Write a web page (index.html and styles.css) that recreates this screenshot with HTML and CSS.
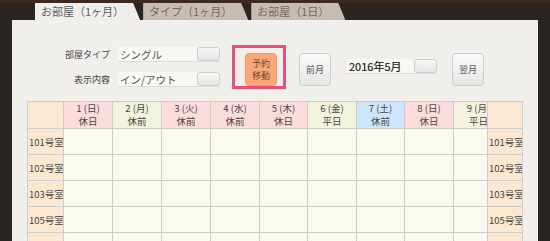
FILE: index.html
```html
<!DOCTYPE html>
<html lang="ja">
<head>
  <meta charset="UTF-8" />
  <meta name="viewport" content="width=device-width, initial-scale=1.0" />
  <title>予約カレンダー</title>
  <link rel="stylesheet" href="styles.css">
</head>
<body>
  <div class="frame">
    <ul class="tabs">
      <li class="tab active">お部屋（1ヶ月）</li>
      <li class="tab">タイプ（1ヶ月）</li>
      <li class="tab">お部屋（1日）</li>
    </ul>

    <div class="panel">
      <div class="toolbar">
        <div class="filters">
          <div class="filter">
            <span class="filter-label">部屋タイプ</span>
            <div class="select"><span class="select-value">シングル</span><span class="select-btn"></span></div>
          </div>
          <div class="filter">
            <span class="filter-label">表示内容</span>
            <div class="select"><span class="select-value">イン/アウト</span><span class="select-btn"></span></div>
          </div>
        </div>

        <div class="highlight">
          <button class="btn btn-reserve">予約<br>移動</button>
        </div>

        <button class="btn btn-prev">前月</button>
        <div class="select select-date"><span class="select-value">2016年5月</span><span class="select-btn"></span></div>
        <button class="btn btn-next">翌月</button>
      </div>

      <table class="calendar">
        <colgroup>
          <col style="width:36px"><col style="width:49px"><col style="width:49px"><col style="width:49px"><col style="width:49px">
          <col style="width:48px"><col style="width:49px"><col style="width:48px"><col style="width:49px"><col style="width:34px"><col style="width:35px">
        </colgroup>
        <thead>
          <tr>
            <th class="room"></th>
            <th class="holiday">1 (日)<br>休日</th>
            <th class="weekday">2 (月)<br>休前</th>
            <th class="holiday">3 (火)<br>休前</th>
            <th class="holiday">4 (水)<br>休前</th>
            <th class="holiday">5 (木)<br>休日</th>
            <th class="weekday">6 (金)<br>平日</th>
            <th class="saturday">7 (土)<br>休前</th>
            <th class="holiday">8 (日)<br>休日</th>
            <th class="weekday cut"><div class="cut-inner">9 (月)<br>平日</div></th>
            <th class="room"></th>
          </tr>
        </thead>
        <tbody>
          <tr>
            <td class="room">101号室</td>
            <td></td><td></td><td></td><td></td><td></td><td></td><td></td><td></td><td></td>
            <td class="room">101号室</td>
          </tr>
          <tr>
            <td class="room">102号室</td>
            <td></td><td></td><td></td><td></td><td></td><td></td><td></td><td></td><td></td>
            <td class="room">102号室</td>
          </tr>
          <tr>
            <td class="room">103号室</td>
            <td></td><td></td><td></td><td></td><td></td><td></td><td></td><td></td><td></td>
            <td class="room">103号室</td>
          </tr>
          <tr>
            <td class="room">105号室</td>
            <td></td><td></td><td></td><td></td><td></td><td></td><td></td><td></td><td></td>
            <td class="room">105号室</td>
          </tr>
          <tr>
            <td class="room"></td>
            <td></td><td></td><td></td><td></td><td></td><td></td><td></td><td></td><td></td>
            <td class="room"></td>
          </tr>
        </tbody>
      </table>
    </div>
  </div>
</body>
</html>
```

FILE: styles.css
```css
:root {
  --fondo: #2b2522;
  --papel: #f0efeb;
  --tab: #c7bcb1;
  --rosa: #eb4f7a;
  --beige: #fce8d0;
  --celda: #fafaf0;
  --borde: #cdcdcd;
}

* {
  box-sizing: border-box;
}

body {
  margin: 0;
  background-color: var(--fondo);
  font-family: "Noto Sans CJK JP", "Noto Sans", sans-serif;
  color: #444;
  overflow: hidden;
}

.frame {
  height: 241px;
  overflow: hidden;
  border-top: 3px solid #3d2b21;
}

/* pestañas */
.tabs {
  display: flex;
  gap: 3px;
  height: 17px;
  margin: 0 0 0 35px;
  padding: 0;
  list-style: none;
}

.tab {
  padding: 0 16px 0 6px;
  font-size: 11px;
  line-height: 17px;
  background: var(--tab);
  color: #736a63;
  clip-path: polygon(0 0, calc(100% - 7px) 0, 100% 100%, 0 100%);
}

.tab.active {
  background: var(--papel);
  color: #5e5e5e;
}

.panel {
  height: 230px;
  margin: 0 12px;
  padding: 25px 16px 0 15px;
  background: var(--papel);
}

/* barra de filtros */
.toolbar {
  display: flex;
  align-items: flex-start;
  height: 44px;
}

.filters {
  display: flex;
  flex-direction: column;
  gap: 10px;
  margin-top: 2px;
}

.filter {
  display: flex;
  align-items: center;
  gap: 8px;
}

.filter-label {
  width: 83px;
  text-align: right;
  font-size: 9px;
  line-height: 15px;
  color: #444;
}

.select {
  display: flex;
  width: 102px;
  height: 15px;
  background: #f7f7f4;
  border-bottom: 1px solid #dcdcdc;
}

.select-value {
  flex: 1;
  padding-left: 2px;
  font-size: 10.5px;
  line-height: 15px;
  color: #555;
  white-space: nowrap;
}

.select-btn {
  width: 23px;
  border: 1px solid #cfcfcf;
  border-radius: 3px;
  background: linear-gradient(#f8f8f8, #e4e4e4);
}

.highlight {
  margin-left: 12px;
  padding: 5px 6px 0 10px;
  border: 3px solid var(--rosa);
}

.btn {
  width: 32px;
  height: 33px;
  padding: 0;
  border: 1px solid #cdcdcd;
  border-radius: 4px;
  background: linear-gradient(#fafafa, #e6e6e6);
  font-family: inherit;
  font-size: 9px;
  line-height: 12px;
  color: #555;
}

.btn-reserve {
  display: block;
  background: #f9a776;
  border-color: #eb9b6d;
  color: #6b4b3a;
}

.btn-prev {
  margin: 8px 0 0 13px;
}

.btn-next {
  margin: 8px 0 0 15px;
}

.select-date {
  width: 90px;
  margin: 14px 0 0 16px;
}

.select-date .select-value {
  font-size: 11px;
  color: #1a1a1a;
  -webkit-text-stroke: 0.2px #1a1a1a;
}

/* calendario */
.calendar {
  width: 495px;
  margin-top: 12px;
  border-collapse: collapse;
  table-layout: fixed;
  font-size: 9.5px;
}

.calendar th,
.calendar td {
  padding: 0;
  border: 1px solid var(--borde);
}

.calendar thead th {
  height: 27px;
  font-weight: normal;
  line-height: 13px;
  color: #444;
}

.calendar tbody td {
  height: 26px;
  background: var(--celda);
}

.calendar .room {
  padding-left: 1px;
  background: var(--beige);
  text-align: left;
  font-size: 9.5px;
  white-space: nowrap;
  overflow: hidden;
}

.holiday {
  background: #fddcdd;
}

.weekday {
  background: #f2f3dc;
}

.saturday {
  background: #cde5fb;
}

.cut {
  overflow: hidden;
}

.cut-inner {
  width: 49px;
  text-align: center;
}
```
